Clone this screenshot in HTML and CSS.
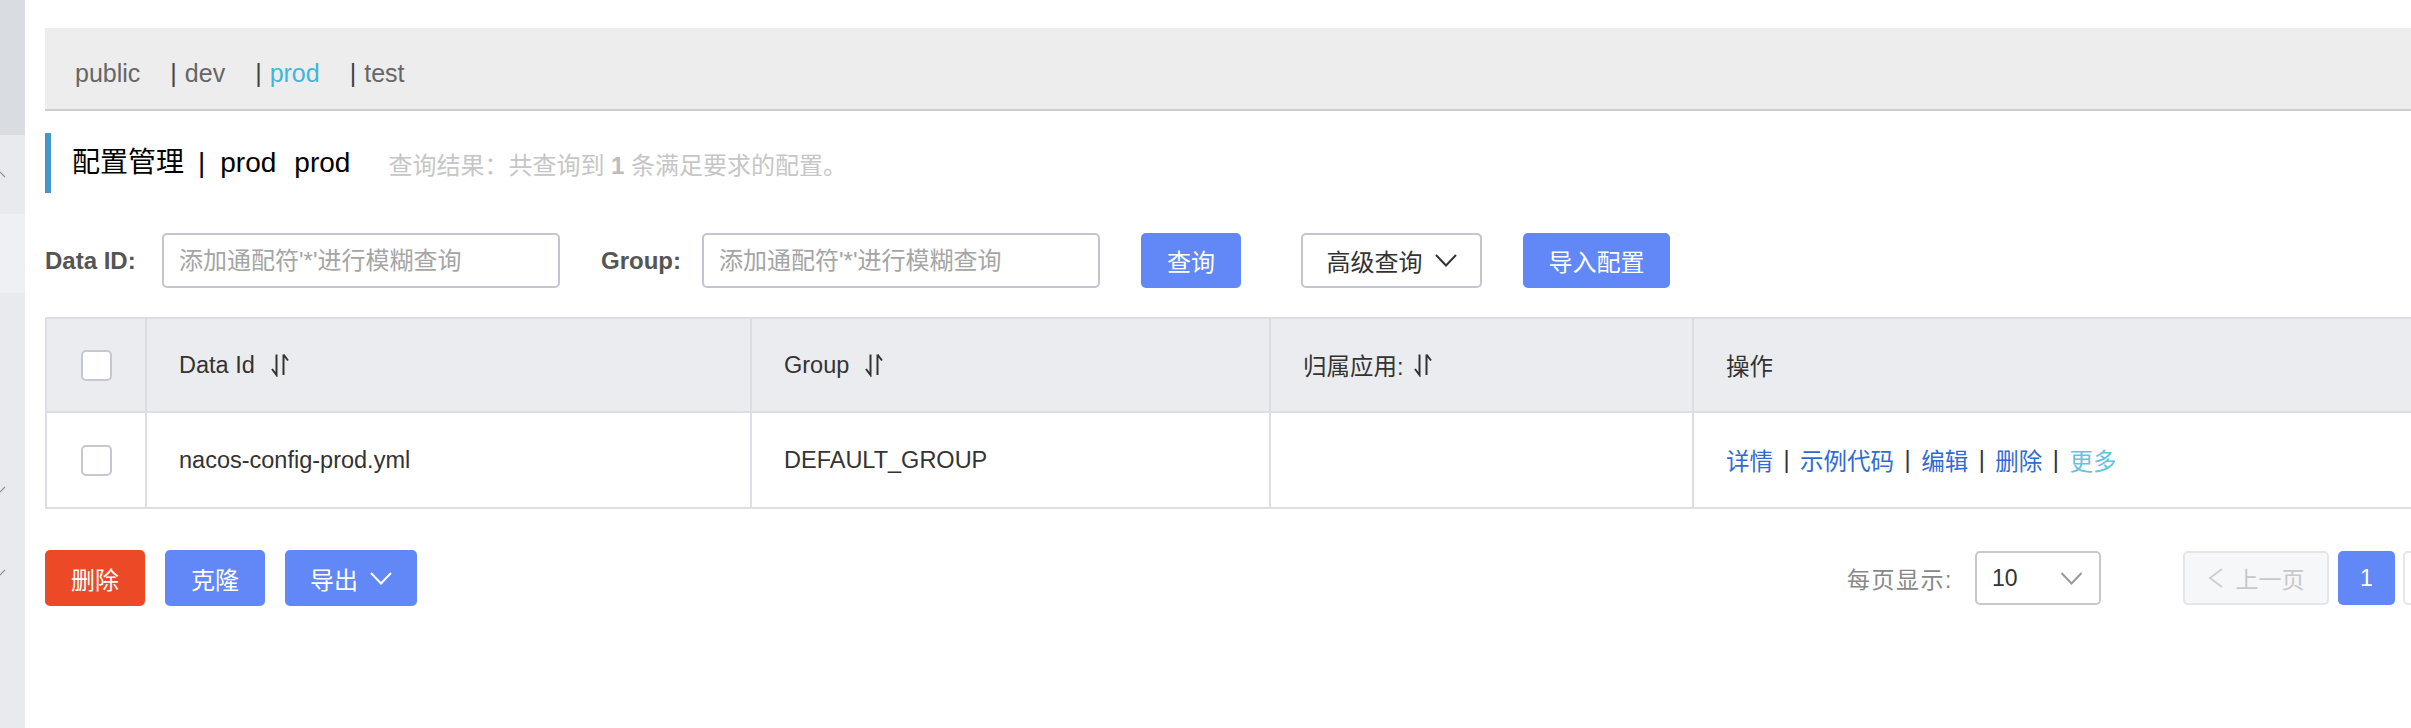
FILE: index.html
```html
<!DOCTYPE html>
<html lang="zh-CN">
<head>
<meta charset="utf-8">
<title>配置管理</title>
<link rel="stylesheet" href="styles.css">
</head>
<body>
<div class="app">
  <aside class="sidebar">
    <div class="sb-top"></div>
    <div class="sb-item">
      <svg class="sb-chev" viewBox="0 0 12 7"><polyline points="1,6 6,1 11,6" fill="none" stroke="#8a8c92" stroke-width="1.2"/></svg>
    </div>
    <div class="sb-item sb-active"></div>
    <div class="sb-rest">
      <div class="sb-row">
        <svg class="sb-chev" viewBox="0 0 12 7"><polyline points="1,1 6,6 11,1" fill="none" stroke="#8a8c92" stroke-width="1.2"/></svg>
      </div>
      <div class="sb-row">
        <svg class="sb-chev" viewBox="0 0 12 7"><polyline points="1,1 6,6 11,1" fill="none" stroke="#8a8c92" stroke-width="1.2"/></svg>
      </div>
    </div>
  </aside>

  <main class="main">
    <div class="ns-bar">
      <span class="ns-item">public</span>
      <span class="ns-item"><span class="ns-sep">|</span>dev</span>
      <span class="ns-item ns-active"><span class="ns-sep">|</span>prod</span>
      <span class="ns-item"><span class="ns-sep">|</span>test</span>
    </div>

    <div class="page-title">
      <h1 class="title-text">配置管理<span class="title-sep">|</span>prod<span class="title-ns">prod</span></h1>
      <span class="result">查询结果：共查询到 <b>1</b> 条满足要求的配置。</span>
    </div>

    <div class="search-row">
      <label class="search-label label-id">Data ID:</label>
      <input class="search-input" type="text" placeholder="添加通配符'*'进行模糊查询">
      <label class="search-label label-group">Group:</label>
      <input class="search-input" type="text" placeholder="添加通配符'*'进行模糊查询">
      <button class="btn btn-primary btn-query">查询</button>
      <button class="btn btn-outline btn-adv">高级查询
        <svg class="chev-down" viewBox="0 0 22 13"><polyline points="1,1 11,11.5 21,1" fill="none" stroke="#333" stroke-width="2"/></svg>
      </button>
      <button class="btn btn-primary btn-import">导入配置</button>
    </div>

    <div class="table">
      <div class="tr thead">
        <div class="td td-check"><span class="checkbox"></span></div>
        <div class="td">Data Id
          <svg class="sort" viewBox="0 0 20 24"><path d="M6.5 1.5 V22 L2 16 M13.5 1.5 V22 M13.5 1.5 L18 7.5" fill="none" stroke="#333" stroke-width="2"/></svg>
        </div>
        <div class="td">Group
          <svg class="sort" viewBox="0 0 20 24"><path d="M6.5 1.5 V22 L2 16 M13.5 1.5 V22 M13.5 1.5 L18 7.5" fill="none" stroke="#333" stroke-width="2"/></svg>
        </div>
        <div class="td">归属应用:
          <svg class="sort sort-tight" viewBox="0 0 20 24"><path d="M6.5 1.5 V22 L2 16 M13.5 1.5 V22 M13.5 1.5 L18 7.5" fill="none" stroke="#333" stroke-width="2"/></svg>
        </div>
        <div class="td">操作</div>
      </div>
      <div class="tr tbody-row">
        <div class="td td-check"><span class="checkbox"></span></div>
        <div class="td">nacos-config-prod.yml</div>
        <div class="td">DEFAULT_GROUP</div>
        <div class="td"></div>
        <div class="td ops">
          <a href="#">详情</a><span class="op-sep">|</span><a href="#">示例代码</a><span class="op-sep">|</span><a href="#">编辑</a><span class="op-sep">|</span><a href="#">删除</a><span class="op-sep">|</span><a href="#" class="op-more">更多</a>
        </div>
      </div>
    </div>

    <div class="bottom-row">
      <button class="btn btn-danger btn-del">删除</button>
      <button class="btn btn-primary btn-clone">克隆</button>
      <button class="btn btn-primary btn-export">导出
        <svg class="chev-down" viewBox="0 0 22 13"><polyline points="1,1 11,11.5 21,1" fill="none" stroke="#fff" stroke-width="2"/></svg>
      </button>

      <div class="pager">
        <span class="pager-label">每页显示:</span>
        <div class="select"><span>10</span>
          <svg class="chev-select" viewBox="0 0 22 13"><polyline points="1,1 11,11.5 21,1" fill="none" stroke="#999" stroke-width="2"/></svg>
        </div>
        <button class="page-btn page-prev">
          <svg class="chev-left" viewBox="0 0 16 20"><polyline points="14,1 2,10 14,19" fill="none" stroke="#cfcfcf" stroke-width="2"/></svg>上一页
        </button>
        <button class="page-btn page-num">1</button>
        <button class="page-btn page-next" aria-label="下一页"></button>
      </div>
    </div>
  </main>
</div>
</body>
</html>
```

FILE: styles.css
```css
* {
  box-sizing: border-box;
}

html,
body {
  margin: 0;
  padding: 0;
}

body {
  width: 2411px;
  height: 728px;
  overflow: hidden;
  background: #fff;
  font-family: "Liberation Sans", "Noto Sans CJK SC", sans-serif;
  color: #333;
}

.app {
  display: flex;
  height: 728px;
}

/* ---------- sidebar ---------- */
.sidebar {
  width: 25px;
  flex-shrink: 0;
  display: flex;
  flex-direction: column;
  background: #e9eaee;
  overflow: hidden;
}

.sb-top {
  height: 135px;
  background: #d9dce1;
}

.sb-item {
  height: 79px;
  background: #e9eaee;
  display: flex;
  align-items: center;
}

.sb-active {
  background: #eff0f4;
}

.sb-rest {
  flex: 1;
  padding-top: 155px;
}

.sb-row {
  height: 83px;
  display: flex;
  align-items: center;
}

.sb-chev {
  width: 12px;
  height: 7px;
  margin-left: -6px;
  flex-shrink: 0;
}

/* ---------- main ---------- */
.main {
  flex: 1;
  min-width: 0;
  overflow: hidden;
  padding: 28px 0 0 20px;
}

.ns-bar {
  height: 83px;
  background: #ededed;
  border-bottom: 2px solid #cdcdcd;
  padding: 33px 0 0 30px;
  display: flex;
  align-items: flex-start;
  font-size: 25px;
  line-height: 25px;
  color: #666;
  white-space: nowrap;
}

.ns-item {
  margin-right: 30px;
}

.ns-sep {
  color: #444;
  margin-right: 8px;
}

.ns-active {
  color: #3fb6dc;
}

/* ---------- title ---------- */
.page-title {
  margin-top: 22px;
  height: 60px;
  border-left: 6px solid #4597c9;
  padding-left: 21px;
  display: flex;
  align-items: center;
  white-space: nowrap;
}

.title-text {
  margin: 0;
  font-size: 28px;
  font-weight: normal;
  line-height: 1;
  color: #000;
}

.title-sep {
  margin: 0 15px 0 14px;
}

.title-ns {
  margin-left: 18px;
}

.result {
  margin-left: 38px;
  font-size: 24px;
  color: #c6c6c6;
}

.result b {
  color: #bcbcbc;
}

/* ---------- search ---------- */
.search-row {
  margin-top: 40px;
  height: 55px;
  display: flex;
  align-items: center;
  white-space: nowrap;
}

.search-label {
  flex-shrink: 0;
  font-size: 24px;
  font-weight: bold;
  color: #555;
}

.label-id {
  width: 117px;
}

.label-group {
  width: 101px;
  margin-left: 41px;
}

.search-input {
  flex-shrink: 0;
  width: 398px;
  height: 55px;
  border: 2px solid #c4c6cf;
  border-radius: 5px;
  padding: 0 15px;
  font: 24px "Liberation Sans", "Noto Sans CJK SC", sans-serif;
  color: #333;
  background: #fff;
  outline: none;
}

.search-input::placeholder {
  color: #a5a5a5;
}

.btn {
  flex-shrink: 0;
  height: 55px;
  border: none;
  border-radius: 5px;
  padding: 0;
  font: 24px "Liberation Sans", "Noto Sans CJK SC", sans-serif;
  display: inline-flex;
  align-items: center;
  justify-content: center;
  cursor: pointer;
}

.btn-primary {
  background: #6287f7;
  color: #fff;
}

.btn-danger {
  background: #ec4a27;
  color: #fff;
}

.btn-outline {
  background: #fff;
  border: 2px solid #c4c6cf;
  color: #333;
}

.btn-query {
  width: 100px;
  margin-left: 41px;
}

.btn-adv {
  width: 181px;
  margin-left: 60px;
  gap: 12px;
}

.btn-import {
  width: 147px;
  margin-left: 41px;
}

.chev-down {
  width: 22px;
  height: 13px;
}

/* ---------- table ---------- */
.table {
  margin-top: 29px;
  border-top: 2px solid #dcdee3;
  border-left: 2px solid #dcdee3;
}

.tr {
  display: grid;
  grid-template-columns: 100px 605px 519px 423px 1fr;
}

.thead {
  height: 94px;
  background: #ebecf0;
}

.tbody-row {
  height: 96px;
}

.td {
  display: flex;
  align-items: center;
  padding-left: 32px;
  border-right: 2px solid #dcdee3;
  border-bottom: 2px solid #dcdee3;
  font-size: 23.5px;
  color: #333;
  white-space: nowrap;
}

.td:last-child {
  border-right: none;
}

.td-check {
  justify-content: center;
  padding-left: 0;
}

.checkbox {
  width: 31px;
  height: 31px;
  border: 2px solid #c6c8cf;
  border-radius: 5px;
  background: #fff;
}

.sort {
  width: 20px;
  height: 24px;
  margin-left: 15px;
}

.sort-tight {
  margin-left: 9px;
}

.ops a {
  color: #2f6bd6;
  text-decoration: none;
}

.ops .op-more {
  color: #63c3e1;
}

.op-sep {
  margin: 0 10.5px;
  color: #333;
}

/* ---------- bottom ---------- */
.bottom-row {
  margin-top: 41px;
  display: flex;
  align-items: center;
  white-space: nowrap;
}

.bottom-row .btn {
  height: 56px;
}

.btn-del {
  width: 100px;
}

.btn-clone {
  width: 100px;
  margin-left: 20px;
}

.btn-export {
  width: 132px;
  margin-left: 20px;
  gap: 12px;
}

.pager {
  flex-shrink: 0;
  margin-left: 1430px;
  display: flex;
  align-items: center;
}

.pager-label {
  width: 128px;
  font-size: 23px;
  letter-spacing: 1.5px;
  color: #888;
}

.select {
  width: 126px;
  height: 54px;
  border: 2px solid #c6c8cf;
  border-radius: 5px;
  padding: 0 16px 0 15px;
  display: flex;
  align-items: center;
  justify-content: space-between;
  font-size: 23px;
  color: #333;
}

.chev-select {
  width: 23px;
  height: 13px;
}

.page-btn {
  flex-shrink: 0;
  height: 54px;
  border-radius: 5px;
  padding: 0;
  font: 23px "Liberation Sans", "Noto Sans CJK SC", sans-serif;
  display: inline-flex;
  align-items: center;
  justify-content: center;
}

.page-prev {
  width: 146px;
  margin-left: 82px;
  gap: 12px;
  background: #f6f7f9;
  border: 2px solid #e5e6ea;
  color: #c8c8c8;
}

.chev-left {
  width: 16px;
  height: 20px;
}

.page-num {
  width: 57px;
  margin-left: 9px;
  border: none;
  background: #6287f7;
  color: #fff;
}

.page-next {
  width: 146px;
  margin-left: 8px;
  background: #fff;
  border: 2px solid #e5e6ea;
}
```
